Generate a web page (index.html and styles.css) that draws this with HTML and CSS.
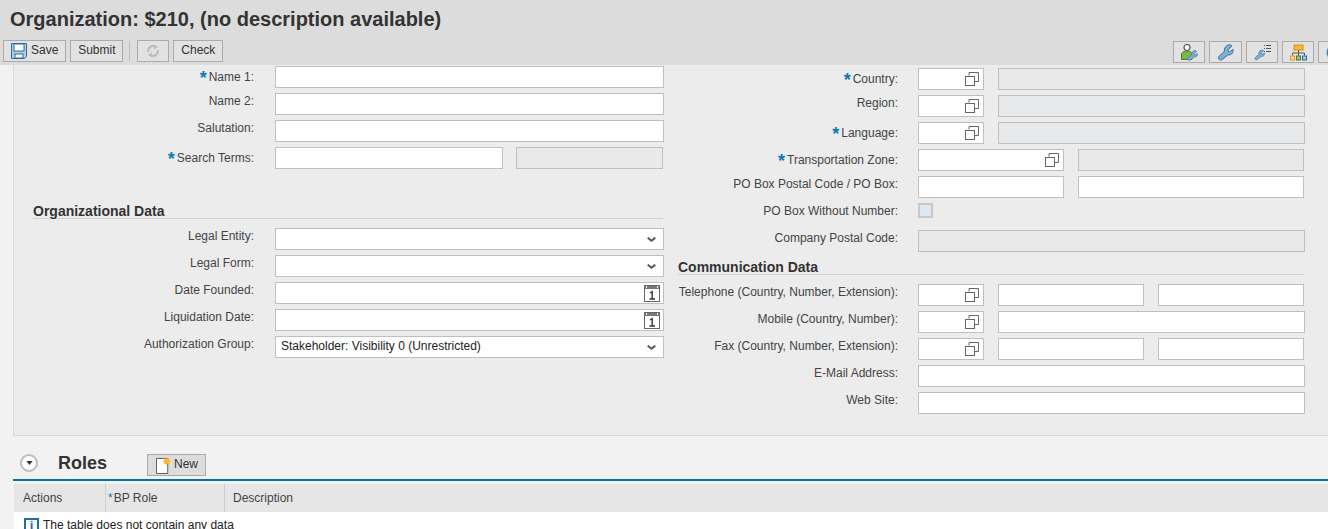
FILE: index.html
```html
<!DOCTYPE html>
<html lang="en">
<head>
<meta charset="utf-8">
<title>Organization</title>
<link rel="stylesheet" href="styles.css">
</head>
<body>
<svg class="defs" width="0" height="0" aria-hidden="true">
  <symbol id="vh" viewBox="0 0 14 14"><path d="M4 3.500V.5h9.500v9H10" fill="none" stroke="#666"/><rect x=".5" y="4.500" width="9" height="9" fill="#fff" stroke="#666"/></symbol>
  <symbol id="cal" viewBox="0 0 16 17"><rect x=".5" y=".5" width="15" height="16" fill="#fff" stroke="#666"/><rect x="1" y="1" width="14" height="3" fill="#777"/><path d="M2.500 1v2M13.500 1v2" stroke="#fff"/><path d="M6 8l2.200-1.200V14M5.500 14h5.500" fill="none" stroke="#333" stroke-width="1.400"/></symbol>
  <symbol id="chev" viewBox="0 0 9 5"><path d="M.7.700l3.800 3L8.300.7" fill="none" stroke="#555" stroke-width="2"/></symbol>
  <symbol id="wrench" viewBox="0 0 24 24"><path d="M21 3l-5 4.500-.5 2.500 2 1.500 5-4c1 4-1.500 8-6 8l-1-.2L7 22c-2 1.500-5 0-5-2.500 0-.8.300-1.500 1-2.200l7.500-7C9.500 5.500 13.500 1 18 1c1.200 0 2.200.8 3 2z" fill="#7fb0d6" stroke="#346d9c" stroke-width="1.400" stroke-linejoin="round"/></symbol>
</svg>
<header class="top">
  <h1 class="title">Organization: $210, (no description available)</h1>
  <div class="toolbar">
    <button class="btn btn-save"><svg class="save" viewBox="0 0 16 16"><path d="M.5.500h15v13l-2 2H.5z" fill="#a9cfea" stroke="#2f6d9f"/><rect x="3" y="1" width="10" height="7" fill="#fff" stroke="#2f6d9f"/><rect x="4" y="11" width="8" height="4" fill="#fff" stroke="#2f6d9f"/></svg>Save</button>
    <button class="btn btn-submit">Submit</button>
    <span class="sep"></span>
    <button class="btn btn-icon"><svg class="refresh" viewBox="0 0 14 14"><path d="M2.500 8A4.500 4.500 0 0 1 9.500 3" fill="none" stroke="#bbb" stroke-width="2"/><path d="M8 .5l4 2.500-4 2.500z" fill="#bbb"/><path d="M11.500 6A4.500 4.500 0 0 1 4.500 11" fill="none" stroke="#bbb" stroke-width="2"/><path d="M6 8.500L2 11l4 2.500z" fill="#bbb"/></svg></button>
    <button class="btn">Check</button>
    <div class="tools">
      <button class="tool"><svg class="ti" viewBox="0 0 17 17"><circle cx="6" cy="3.500" r="3" fill="#fff" stroke="#555" stroke-width="1.200"/><path d="M.5 15.500V9.500C1.500 8 3.500 7 6 7s4.500 1 5 2.500v6z" fill="#7ab648" stroke="#4c7f36"/><svg x="6" y="6" width="11" height="11" viewBox="0 0 24 24"><use href="#wrench"/></svg></svg></button>
      <button class="tool tool-w"><svg class="ti" viewBox="0 0 24 24"><use href="#wrench"/></svg></button>
      <button class="tool"><svg class="ti" viewBox="0 0 17 17"><svg x="0" y="5" width="11" height="12" viewBox="0 0 24 24"><use href="#wrench"/></svg><path d="M10 1.500h1M10 4.500h1M10 7.500h1M12 1.500h5M12 4.500h5M12 7.500h5" stroke="#555"/></svg></button>
      <button class="tool"><svg class="ti" viewBox="0 0 17 16"><rect x="4" y=".5" width="9" height="5" fill="#f5b82e" stroke="#d9920a"/><path d="M8.500 5.500v6M2.500 11V8.500h12V11" fill="none" stroke="#555"/><rect x=".5" y="11.500" width="4" height="4" fill="#f9d98a" stroke="#e09a10"/><rect x="6.500" y="11.500" width="4" height="4" fill="#9ac77a" stroke="#4c7f36"/><rect x="12.500" y="11.500" width="4" height="4" fill="#9fc6e4" stroke="#2f6d9f"/></svg></button>
      <button class="tool tool-cut"><svg class="ti" viewBox="0 0 17 17"><circle cx="8.500" cy="8.500" r="7" fill="none" stroke="#4a86b8" stroke-width="2"/></svg></button>
    </div>
  </div>
</header>
<main class="panel">
  <section class="col col-l">
    <div class="row"><label class="lab lab-n1"><span class="req">*</span>Name 1:</label><input class="f f-full"></div>
    <div class="row"><label class="lab lab-a">Name 2:</label><input class="f f-full"></div>
    <div class="row"><label class="lab lab-a">Salutation:</label><input class="f f-full"></div>
    <div class="row"><label class="lab lab-n3"><span class="req">*</span>Search Terms:</label><input class="f f-search"><input class="f f-ro f-desc"></div>
    <h2 class="sec sec-org">Organizational Data</h2>
    <div class="row"><label class="lab lab-a">Legal Entity:</label><div class="f f-full f-box"><svg class="chev"><use href="#chev"/></svg></div></div>
    <div class="row"><label class="lab lab-a">Legal Form:</label><div class="f f-full f-box"><svg class="chev"><use href="#chev"/></svg></div></div>
    <div class="row"><label class="lab lab-a">Date Founded:</label><div class="f f-full f-box"><svg class="cal"><use href="#cal"/></svg></div></div>
    <div class="row"><label class="lab lab-a">Liquidation Date:</label><div class="f f-full f-box"><svg class="cal"><use href="#cal"/></svg></div></div>
    <div class="row"><label class="lab lab-a">Authorization Group:</label><div class="f f-full f-box f-text">Stakeholder: Visibility 0 (Unrestricted)<svg class="chev"><use href="#chev"/></svg></div></div>
  </section>
  <section class="col col-r">
    <div class="row"><label class="lab lab-c"><span class="req">*</span>Country:</label><div class="f f-short f-box"><svg class="vh"><use href="#vh"/></svg></div><input class="f f-ro f-w306"></div>
    <div class="row"><label class="lab lab-a">Region:</label><div class="f f-short f-box"><svg class="vh"><use href="#vh"/></svg></div><input class="f f-ro f-w306"></div>
    <div class="row"><label class="lab lab-c"><span class="req">*</span>Language:</label><div class="f f-short f-box"><svg class="vh"><use href="#vh"/></svg></div><input class="f f-ro f-w306"></div>
    <div class="row"><label class="lab lab-c"><span class="req">*</span>Transportation Zone:</label><div class="f f-mid f-box"><svg class="vh"><use href="#vh"/></svg></div><input class="f f-ro f-w226"></div>
    <div class="row"><label class="lab lab-a">PO Box Postal Code / PO Box:</label><div class="f f-mid"></div><input class="f f-w226"></div>
    <div class="row"><label class="lab lab-chk">PO Box Without Number:</label><span class="check"></span></div>
    <div class="row"><label class="lab lab-a">Company Postal Code:</label><input class="f f-ro f-long"></div>
    <h2 class="sec sec-comm">Communication Data</h2>
    <div class="row"><label class="lab lab-a">Telephone (Country, Number, Extension):</label><div class="f f-short f-box"><svg class="vh"><use href="#vh"/></svg></div><input class="f f-w146"><input class="f f-w146"></div>
    <div class="row"><label class="lab lab-a">Mobile (Country, Number):</label><div class="f f-short f-box"><svg class="vh"><use href="#vh"/></svg></div><input class="f f-w306"></div>
    <div class="row"><label class="lab lab-a">Fax (Country, Number, Extension):</label><div class="f f-short f-box"><svg class="vh"><use href="#vh"/></svg></div><input class="f f-w146"><input class="f f-w146"></div>
    <div class="row"><label class="lab lab-a">E-Mail Address:</label><input class="f f-long"></div>
    <div class="row"><label class="lab lab-a">Web Site:</label><input class="f f-long"></div>
  </section>
</main>
<section class="roles">
  <div class="roles-head">
    <span class="toggle"><svg viewBox="0 0 8 5" class="tri"><path d="M0 0h8L4 5z" fill="#333"/></svg></span>
    <h2 class="roles-title">Roles</h2>
    <button class="btn btn-new"><svg class="newdoc" viewBox="0 0 16 18"><path d="M.5 1.500h12v16H.500z" fill="#fff" stroke="#555"/><path d="M11.500 0l1 2 2-1-.5 2.200 2 1.300-2 1.300.5 2.200-2-1-1 2-1-2-2 1 .5-2.200-2-1.300 2-1.300L8.500 1l2 1z" fill="#f5b82e"/></svg>New</button>
  </div>
  <div class="table">
    <div class="thead">
      <div class="th th-a">Actions</div>
      <div class="th th-b"><span class="req-small">*</span>BP Role</div>
      <div class="th th-c">Description</div>
    </div>
    <div class="tbody"><span class="info">i</span>The table does not contain any data</div>
  </div>
</section>
</body>
</html>
```
FILE: styles.css
```css
* { box-sizing: border-box; }
html, body { margin: 0; height: 529px; overflow: hidden; }
body { background: #f2f2f2; font: 12px "Liberation Sans", Arial, sans-serif; color: #333; }
.defs { position: absolute; }

.top { height: 65px; background: #dcdcdc; padding: 0 0 0 3px; overflow: hidden; }
.title { margin: 0; padding: 8px 0 0 7px; height: 40px; font-size: 20px; line-height: 22px; font-weight: bold; color: #333; white-space: nowrap; }
.toolbar { display: flex; align-items: flex-start; gap: 4px; }
.btn { height: 22px; padding: 0 7px 2px; border: 1px solid #ababab; background: #e2e2e2; font: 12px "Liberation Sans", Arial, sans-serif; color: #333; display: inline-flex; align-items: center; }
.btn-submit { width: 53px; justify-content: center; padding-left: 0; padding-right: 0; }
.save { width: 16px; height: 16px; margin: 2px 4px 0 0; }
.sep { width: 1px; height: 20px; background: #bdbdbd; margin: 1px 3px 0 2px; }
.btn-icon { width: 32px; justify-content: center; padding: 0; }
.refresh { width: 14px; height: 14px; }
.tools { margin-left: auto; margin-top: 1px; margin-right: -22px; display: flex; gap: 4px; }
.tool { width: 32px; height: 22px; padding: 0; border: 1px solid #ababab; background: #e2e2e2; display: flex; align-items: center; justify-content: center; }
.tool-w { width: 33px; }
.ti { width: 17px; height: 17px; }
.tool-cut { justify-content: flex-start; padding-left: 7px; }

.panel { margin-left: 13px; height: 371px; background: #ececec; border-left: 1px solid #dadada; border-bottom: 1px solid #dadada; display: flex; overflow: hidden; }
.col { display: flex; flex-direction: column; }
.col-l { width: 650px; padding-top: 1px; gap: 5px; }
.col-r { padding-top: 3px; gap: 5px; margin-left: 14px; }
.row { display: flex; align-items: flex-start; height: 22px; }
.col-l .lab { width: 240px; margin-right: 21px; }
.col-r .lab { width: 220px; margin-right: 20px; }
.lab { text-align: right; white-space: nowrap; color: #444; line-height: 14px; flex: none; }
.lab-n1 { margin-top: 4px; }
.lab-n3 { margin-top: 4px; }
.lab-a { margin-top: 1px; }
.lab-c { margin-top: 4px; }
.lab-chk { margin-top: 1px; }
.req { color: #0a7ab8; font-size: 18px; line-height: 12px; font-weight: bold; vertical-align: -3px; margin-right: 2px; }
.req-small { color: #0a7ab8; margin-right: 1px; }

.f { display: block; height: 22px; border: 1px solid #bfbfbf; background: #fff; padding: 0; margin: 0; flex: none; border-radius: 0; outline: 0; }
.f-ro { background: #e7e9eb; }
.f-full { width: 389px; }
.f-search { width: 228px; }
.f-desc { width: 147px; margin-left: 13px; }
.f-box { position: relative; }
.f-short { width: 66px; }
.f-mid { width: 146px; }
.f-long { width: 387px; }
.f-w306 { width: 307px; margin-left: 14px; }
.f-w226 { width: 226px; margin-left: 14px; }
.f-w146 { width: 146px; margin-left: 14px; }
.f-text { padding: 2px 0 0 5px; line-height: 14px; color: #222; }
.chev { position: absolute; right: 7px; top: 8px; width: 9px; height: 5px; }
.cal { position: absolute; right: 3px; top: 2px; width: 16px; height: 17px; }
.vh { position: absolute; right: 4px; top: 3px; width: 14px; height: 14px; }
.check { width: 15px; height: 15px; border: 2px solid #c6c9cc; background: #dde8f1; flex: none; }
.sec { margin: 0; font-size: 14px; line-height: 14px; font-weight: bold; color: #333; border-bottom: 1px solid #d2d2d2; height: 15px; }
.sec-org { margin: 30px 0 4px 19px; width: 630px; }
.sec-comm { margin: 3px 0 4px 0; width: 626px; }

.roles { padding: 0 0 0 13px; }
.roles-head { height: 45px; display: flex; align-items: flex-start; border-bottom: 2px solid #0a6ea8; padding-top: 17px; }
.toggle { width: 18px; height: 18px; margin: 1px 0 0 7px; border-radius: 50%; background: #fff; border: 2px solid #bdbdbd; display: flex; align-items: center; justify-content: center; }
.tri { width: 7px; height: 4px; }
.roles-title { margin: 0 0 0 20px; font-size: 18px; line-height: 20px; font-weight: bold; color: #333; width: 89px; }
.btn-new { margin-top: 1px; width: 59px; padding: 0 0 2px 8px; background: #ddd; }
.newdoc { width: 15px; height: 17px; margin: 2px 3px 0 0; }
.table { margin-left: 1px; }
.thead { height: 28px; display: flex; background: #e6e6e6; margin-top: 3px; }
.th { padding: 0 0 0 9px; line-height: 28px; color: #444; border-right: 1px solid #cfcfcf; }
.th-a { width: 92px; }
.th-b { width: 119px; padding-left: 2px; }
.th-c { border-right: 0; padding-left: 8px; }
.tbody { background: #fff; height: 30px; padding: 6px 0 0 10px; color: #222; display: flex; align-items: flex-start; line-height: 14px; }
.info { width: 15px; height: 15px; margin-right: 4px; background: #fff; border: 2px solid #1a6fa8; color: #1a6fa8; font-weight: bold; font-size: 13px; line-height: 12px; text-align: center; }
```
